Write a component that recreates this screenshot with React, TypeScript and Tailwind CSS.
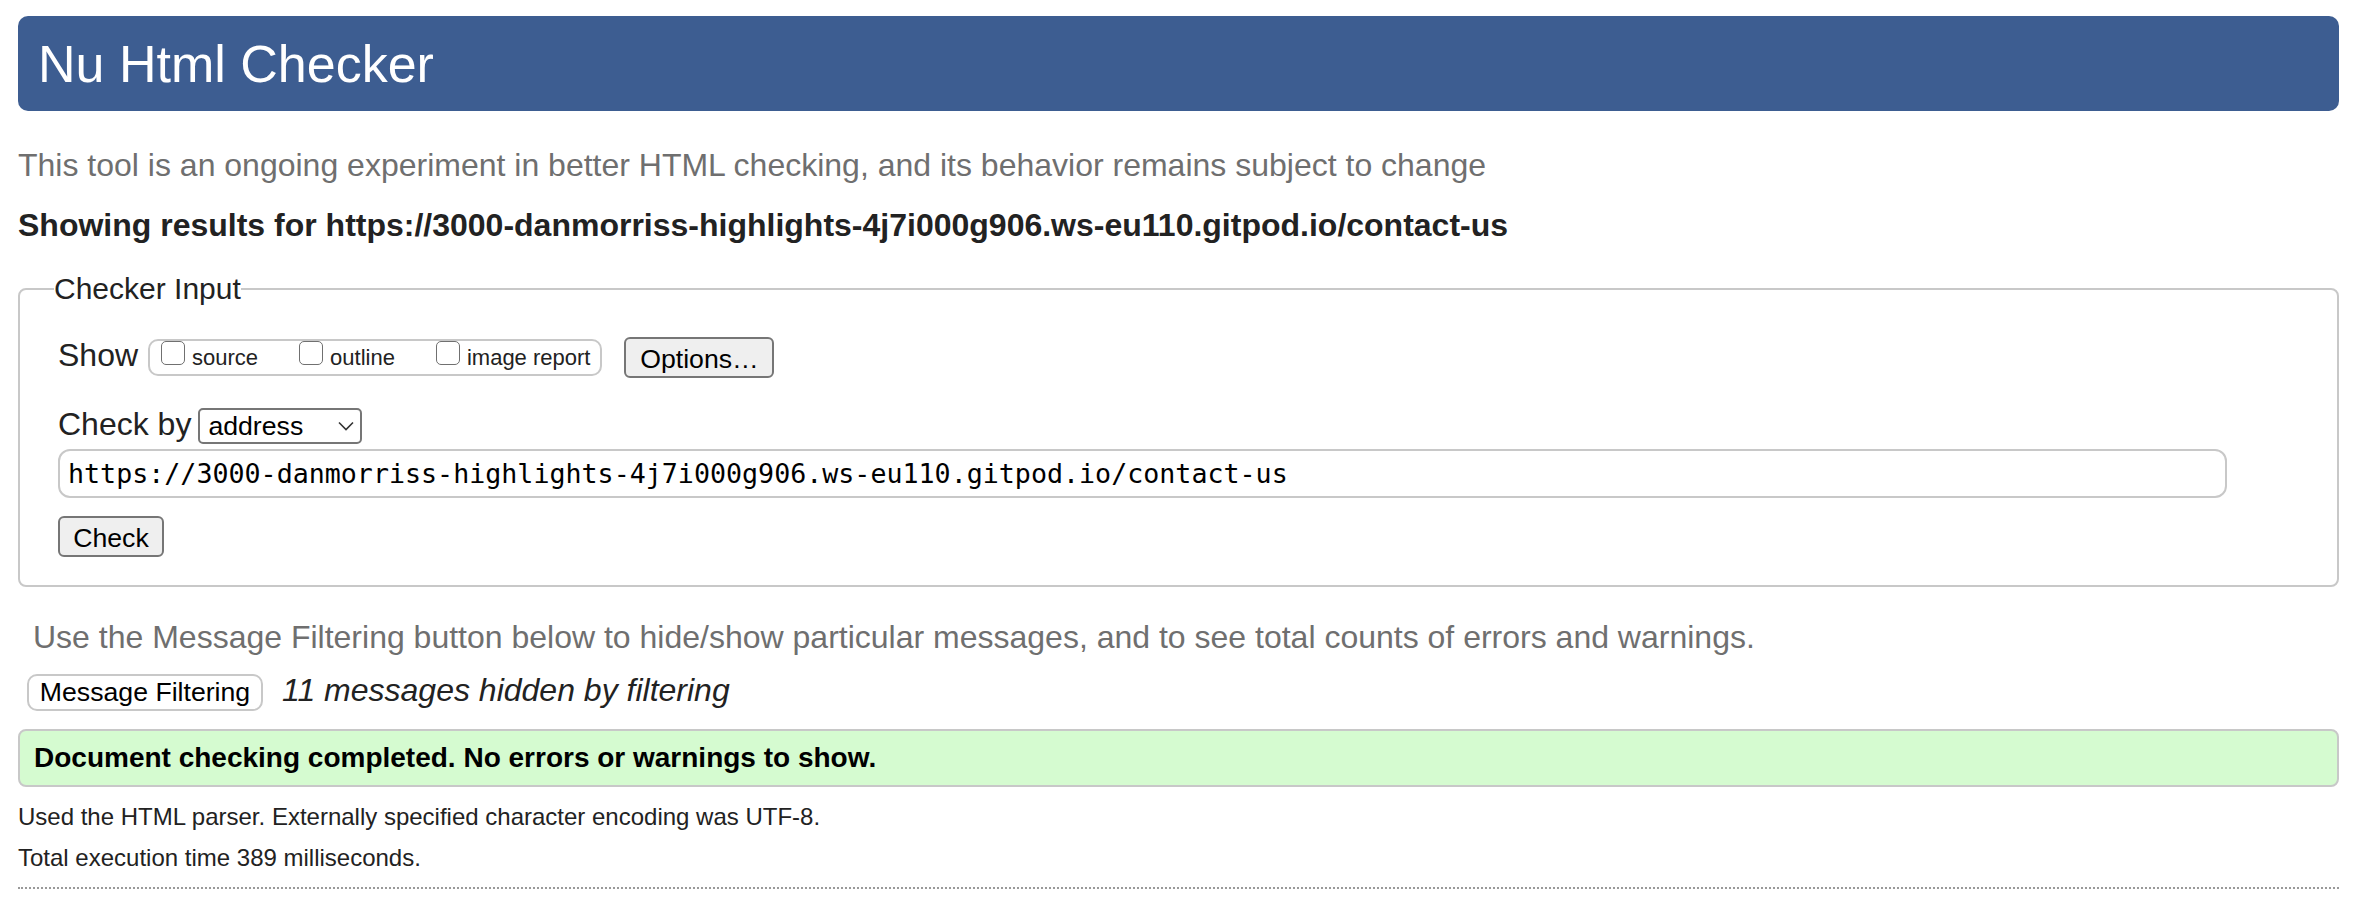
import { useState } from 'react';

function Checkbox({ label }: { label: string }) {
  const [checked, setChecked] = useState(false);
  return (
    <label className="flex items-start gap-[7px] cursor-pointer" onClick={() => setChecked(!checked)}>
      <span className="w-[24px] h-[24px] rounded-[5px] border-[1.5px] border-[#707070] bg-white flex items-center justify-center text-[16px] leading-none">
        {checked ? '✓' : ''}
      </span>
      <span className="text-[22px] leading-[33px] text-[#222]">{label}</span>
    </label>
  );
}

export default function App() {
  return (
    <div className="min-h-screen bg-white pl-[18px] pr-[27px] pt-[16px] font-['Liberation_Sans',Arial,sans-serif] text-[#222]">
      <h1 className="h-[95px] flex items-center rounded-[10px] bg-[#3d5d91] px-[20px] text-[52px] font-normal text-white">
        Nu Html Checker
      </h1>

      <p className="mt-[36px] text-[32px] leading-[37px] text-[#6f6f6f]">
        This tool is an ongoing experiment in better HTML checking, and its behavior remains subject to change
      </p>
      <p className="mt-[23px] text-[32px] leading-[37px] font-bold text-[#222]">
        Showing results for https://3000-danmorriss-highlights-4j7i000g906.ws-eu110.gitpod.io/contact-us
      </p>

      {/* Checker Input */}
      <fieldset className="mt-[28px] rounded-[8px] border-2 border-[#c8c8c8] pl-[38px] pr-[20px] pt-[31px] pb-[28px]">
        <legend className="ml-[-4px] text-[30px] leading-[34px] text-[#222]">Checker Input</legend>

        <div className="flex items-start">
          <span className="text-[32px] leading-[36px]">Show</span>
          <div className="ml-[10px] mt-[2px] h-[37px] flex items-start gap-[41px] rounded-[10px] border-2 border-[#c8c8c8] pl-[11px] pr-[10px]">
            <Checkbox label="source" />
            <Checkbox label="outline" />
            <Checkbox label="image report" />
          </div>
          <button className="ml-[22px] w-[150px] h-[41px] rounded-[6px] border-2 border-[#767676] bg-[#efefef] text-[26.67px] text-black">
            Options…
          </button>
        </div>

        <div className="mt-[30px] flex items-start">
          <span className="text-[32px] leading-[32px]">Check by</span>
          <div className="ml-[7px] w-[164px] h-[36px] flex items-center justify-between rounded-[5px] border-2 border-[#767676] bg-white pl-[8px] pr-[6px] text-[26.67px] text-black">
            <span>address</span>
            <svg width="16" height="10" viewBox="0 0 16 10" fill="none">
              <path d="M1 1.5 L8 8.5 L15 1.5" stroke="#333" strokeWidth="1.6" />
            </svg>
          </div>
        </div>

        <input
          readOnly
          defaultValue="https://3000-danmorriss-highlights-4j7i000g906.ws-eu110.gitpod.io/contact-us"
          className="mt-[5px] block w-[2169px] h-[49px] rounded-[12px] border-2 border-[#c8c8c8] px-[8px] font-['DejaVu_Sans_Mono',monospace] text-[26.67px] text-black outline-none"
        />

        <button className="mt-[18px] block w-[106px] h-[41px] rounded-[6px] border-2 border-[#767676] bg-[#efefef] text-[26.67px] text-black">
          Check
        </button>
      </fieldset>

      <p className="mt-[32px] ml-[15px] text-[32px] leading-[37px] text-[#6f6f6f]">
        Use the Message Filtering button below to hide/show particular messages, and to see total counts of errors and warnings.
      </p>

      <div className="mt-[18px] flex items-start">
        <button className="ml-[9px] w-[236px] h-[37px] rounded-[10px] border-2 border-[#c8c8c8] bg-white text-[26.67px] leading-[31px] text-black">
          Message Filtering
        </button>
        <span className="ml-[19px] text-[32px] leading-[33px] italic text-[#222]">11 messages hidden by filtering</span>
      </div>

      <div className="mt-[18px] h-[58px] flex items-center rounded-[8px] border-2 border-[#c8c8c8] bg-[#d5fbd0] px-[14px] text-[28px] font-bold text-black">
        Document checking completed. No errors or warnings to show.
      </div>

      <p className="mt-[16px] text-[24px] leading-[28px] text-[#222]">
        Used the HTML parser. Externally specified character encoding was UTF-8.
      </p>
      <p className="mt-[13px] text-[24px] leading-[28px] text-[#222]">Total execution time 389 milliseconds.</p>

      <div className="mt-[15px] border-t-2 border-dotted border-[#999]" />
    </div>
  );
}
